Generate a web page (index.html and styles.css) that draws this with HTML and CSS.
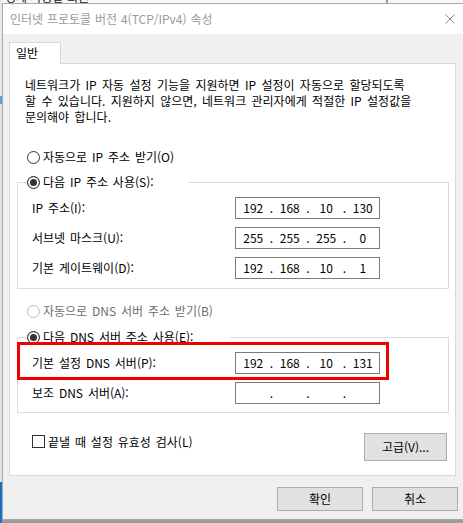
FILE: index.html
```html
<!DOCTYPE html>
<html lang="ko">
<head>
<meta charset="utf-8">
<title>인터넷 프로토콜 버전 4(TCP/IPv4) 속성</title>
<link rel="stylesheet" href="styles.css">
</head>
<body>
<div class="screen">
  <div class="bgwin"><span class="bgtext">경제 사용할 회원</span><span class="bgedge"></span></div>
  <div class="leftstrip"></div>
  <div class="dialog">
    <div class="titlebar">
      <span class="title">인터넷 프로토콜 버전 4(TCP/IPv4) 속성</span>
      <svg class="close" viewBox="0 0 10 10" width="10" height="10"><path d="M0.5 0.5 L9.5 9.5 M9.5 0.5 L0.5 9.5" stroke="#8a8a8a" stroke-width="1" fill="none"/></svg>
    </div>
    <div class="body">
      <div class="tabs"><div class="tab">일반</div></div>
      <div class="panel">
        <p class="desc">네트워크가 IP 자동 설정 기능을 지원하면 IP 설정이 자동으로 할당되도록<br>할 수 있습니다. 지원하지 않으면, 네트워크 관리자에게 적절한 IP 설정값을<br>문의해야 합니다.</p>

        <div class="radio first"><span class="rb"></span><span class="rtext">자동으로 IP 주소 받기(O)</span></div>

        <fieldset class="group g1">
          <legend class="leg1"><span class="radio"><span class="rb on"></span><span class="rtext">다음 IP 주소 사용(S):</span></span></legend>
          <div class="rows">
            <div class="row"><span class="lbl">IP 주소(I):</span>
              <div class="ip"><span class="oct">192</span><span class="dot">.</span><span class="oct">168</span><span class="dot">.</span><span class="oct">10</span><span class="dot">.</span><span class="oct">130</span></div>
            </div>
            <div class="row"><span class="lbl">서브넷 마스크(U):</span>
              <div class="ip"><span class="oct">255</span><span class="dot">.</span><span class="oct">255</span><span class="dot">.</span><span class="oct">255</span><span class="dot">.</span><span class="oct">0</span></div>
            </div>
            <div class="row"><span class="lbl">기본 게이트웨이(D):</span>
              <div class="ip"><span class="oct">192</span><span class="dot">.</span><span class="oct">168</span><span class="dot">.</span><span class="oct">10</span><span class="dot">.</span><span class="oct">1</span></div>
            </div>
          </div>
        </fieldset>

        <div class="radio dns-auto disabled"><span class="rb"></span><span class="rtext">자동으로 DNS 서버 주소 받기(B)</span></div>

        <fieldset class="group g2">
          <legend class="leg2"><span class="radio"><span class="rb on"></span><span class="rtext">다음 DNS 서버 주소 사용(E):</span></span></legend>
          <div class="rows">
            <div class="row highlighted"><span class="lbl">기본 설정 DNS 서버(P):</span>
              <div class="ip"><span class="oct">192</span><span class="dot">.</span><span class="oct">168</span><span class="dot">.</span><span class="oct">10</span><span class="dot">.</span><span class="oct">131</span></div>
              <span class="redbox"></span>
            </div>
            <div class="row"><span class="lbl">보조 DNS 서버(A):</span>
              <div class="ip"><span class="oct"></span><span class="dot">.</span><span class="oct"></span><span class="dot">.</span><span class="oct"></span><span class="dot">.</span><span class="oct"></span></div>
            </div>
          </div>
        </fieldset>

        <div class="bottomrow">
          <div class="check"><span class="cb"></span><span class="ctext">끝낼 때 설정 유효성 검사(L)</span></div>
          <button class="btn adv">고급(V)...</button>
        </div>
      </div>
      <div class="footer">
        <button class="btn dlg">확인</button>
        <button class="btn dlg">취소</button>
      </div>
    </div>
  </div>
</div>
</body>
</html>
```

FILE: styles.css
```css
* { box-sizing: border-box; }
html, body { margin: 0; padding: 0; }
body {
  width: 463px;
  height: 523px;
  overflow: hidden;
  font-family: "Noto Sans CJK KR", "Noto Sans", sans-serif;
  font-size: 12px;
  color: #000;
}
.screen {
  position: relative;
  width: 463px;
  height: 523px;
  overflow: hidden;
  background: #9c9c9c;
}
.bgwin {
  position: absolute;
  left: 0;
  top: 0;
  width: 463px;
  height: 10px;
  background: #f7f7f7;
  overflow: hidden;
}
.bgtext {
  position: absolute;
  left: 5px;
  top: -11px;
  line-height: 16px;
  color: #111;
}
.bgedge {
  position: absolute;
  left: 386px;
  top: 0;
  width: 2px;
  height: 10px;
  background: #9a9a9a;
}
.leftstrip {
  position: absolute;
  left: 0;
  top: 0;
  width: 2px;
  height: 523px;
  background: linear-gradient(#e9e9e9 0 96px, #5aa0dc 96px 104px, #e2e2e2 104px 482px, #1672c4 482px);
}
.dialog {
  position: absolute;
  left: 2px;
  top: 3px;
  width: 463px;
  height: 517px;
  border: 1px solid #a8a8a8;
  background: #f0f0f0;
  display: flex;
  flex-direction: column;
}
.titlebar {
  height: 30px;
  flex: none;
  background: #fff;
  display: flex;
  align-items: center;
  justify-content: space-between;
  padding: 0 9px 0 7px;
}
.title {
  color: #9a9a9a;
  line-height: 16px;
  white-space: nowrap;
  word-spacing: 0.5px;
}
.close { display: block; }
.body {
  padding: 8px 0 0 6px;
}
.tabs { display: flex; }
.tab {
  position: relative;
  width: 52px;
  height: 22px;
  margin-bottom: -1px;
  border: 1px solid #d9d9d9;
  border-bottom: none;
  background: #fff;
  padding-left: 6px;
  line-height: 20px;
}
.panel {
  width: 447px;
  border: 1px solid #d9d9d9;
  background: #fff;
  padding: 0 0 14px 0;
  word-spacing: 1.5px;
}
.desc {
  margin: 13px 0 0 15px;
  line-height: 16px;
  white-space: nowrap;
  word-spacing: 2px;
}
.radio {
  display: flex;
  align-items: center;
  height: 16px;
  line-height: 16px;
  white-space: nowrap;
}
.radio.first { margin: 24px 0 0 17px; }
.rb {
  flex: none;
  width: 13px;
  height: 13px;
  border: 1px solid #333;
  border-radius: 50%;
  background: #fff;
  margin-right: 3px;
}
.rb.on {
  background: #333;
  box-shadow: inset 0 0 0 2px #fff;
}
.disabled { color: #6d6d6d; }
.disabled .rb { border-color: #bcbcbc; }
.radio.dns-auto { margin: 14px 0 0 17px; }

.group {
  margin: 9px 6px 0 7px;
  padding: 0;
  border: 1px solid #dcdcdc;
  min-inline-size: 0;
  position: relative;
}
.g2 { margin-top: 10px; }
.group legend {
  padding: 0;
  margin-left: 9px;
  height: 16px;
}
.leg1 { width: 161px; }
.leg2 { width: 203px; }
.rows {
  display: flex;
  flex-direction: column;
  gap: 8px;
  padding: 7px 0 9px 14px;
}
.g2 .rows { padding-bottom: 8px; }
.row {
  position: relative;
  display: flex;
  align-items: center;
  height: 22px;
}
.lbl {
  width: 203px;
  flex: none;
  white-space: nowrap;
  line-height: 16px;
}
.ip {
  width: 145px;
  height: 22px;
  flex: none;
  border: 1px solid #7a7a7a;
  background: #fff;
  display: flex;
  align-items: center;
  padding: 0 0 0 1px;
  line-height: 16px;
  word-spacing: 0;
}
.oct {
  flex: 1;
  text-align: center;
}
.dot {
  width: 4px;
  flex: none;
  text-align: center;
}
.redbox {
  position: absolute;
  left: -15px;
  top: -10px;
  width: 372px;
  height: 38px;
  border: 3px solid #ee0000;
  pointer-events: none;
}
.bottomrow {
  display: flex;
  justify-content: space-between;
  align-items: flex-start;
  margin: 20px 8px 0 22px;
}
.check {
  display: flex;
  align-items: center;
  margin-top: 2px;
  height: 13px;
  white-space: nowrap;
}
.cb {
  width: 13px;
  height: 13px;
  border: 1px solid #333;
  background: #fff;
  margin-right: 3px;
}
.ctext { line-height: 16px; }
.btn {
  font-family: inherit;
  font-size: 12px;
  color: #000;
  background: #e1e1e1;
  border: 1px solid #adadad;
  padding: 0;
  margin: 0;
  line-height: 16px;
  word-spacing: 0;
}
.adv {
  width: 83px;
  height: 28px;
}
.footer {
  display: flex;
  justify-content: flex-end;
  gap: 9px;
  margin-top: 11px;
  padding-right: 6px;
}
.dlg {
  width: 86px;
  height: 24px;
}
```
